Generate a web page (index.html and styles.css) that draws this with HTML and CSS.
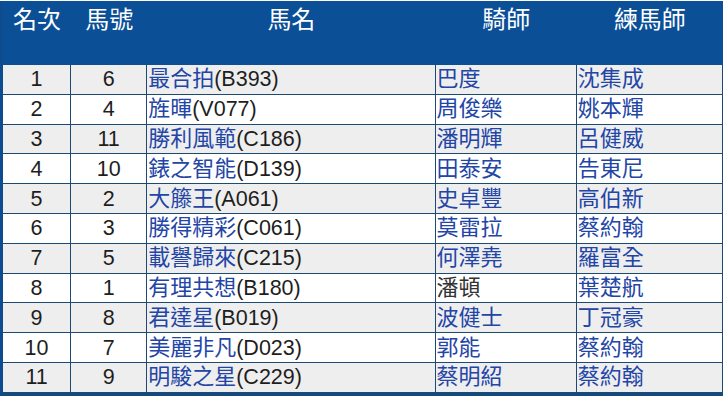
FILE: index.html
```html
<!DOCTYPE html>
<html lang="zh-Hant">
<head>
<meta charset="utf-8">
<title>排位表</title>
<link rel="stylesheet" href="styles.css">
</head>
<body>
<table class="race">
  <colgroup>
    <col class="c-rank"><col class="c-no"><col class="c-horse"><col class="c-jockey"><col class="c-trainer">
  </colgroup>
  <thead>
    <tr><th>名次</th><th>馬號</th><th>馬名</th><th>騎師</th><th>練馬師</th></tr>
  </thead>
  <tbody>
    <tr><td class="num">1</td><td class="num">6</td><td class="name"><span class="lk">最合拍</span>(B393)</td><td class="name lk">巴度</td><td class="name lk">沈集成</td></tr>
    <tr><td class="num">2</td><td class="num">4</td><td class="name"><span class="lk">旌暉</span>(V077)</td><td class="name lk">周俊樂</td><td class="name lk">姚本輝</td></tr>
    <tr><td class="num">3</td><td class="num">11</td><td class="name"><span class="lk">勝利風範</span>(C186)</td><td class="name lk">潘明輝</td><td class="name lk">呂健威</td></tr>
    <tr><td class="num">4</td><td class="num">10</td><td class="name"><span class="lk">錶之智能</span>(D139)</td><td class="name lk">田泰安</td><td class="name lk">告東尼</td></tr>
    <tr><td class="num">5</td><td class="num">2</td><td class="name"><span class="lk">大籐王</span>(A061)</td><td class="name lk">史卓豐</td><td class="name lk">高伯新</td></tr>
    <tr><td class="num">6</td><td class="num">3</td><td class="name"><span class="lk">勝得精彩</span>(C061)</td><td class="name lk">莫雷拉</td><td class="name lk">蔡約翰</td></tr>
    <tr><td class="num">7</td><td class="num">5</td><td class="name"><span class="lk">載譽歸來</span>(C215)</td><td class="name lk">何澤堯</td><td class="name lk">羅富全</td></tr>
    <tr><td class="num">8</td><td class="num">1</td><td class="name"><span class="lk">有理共想</span>(B180)</td><td class="name plain">潘頓</td><td class="name lk">葉楚航</td></tr>
    <tr><td class="num">9</td><td class="num">8</td><td class="name"><span class="lk">君達星</span>(B019)</td><td class="name lk">波健士</td><td class="name lk">丁冠豪</td></tr>
    <tr><td class="num">10</td><td class="num">7</td><td class="name"><span class="lk">美麗非凡</span>(D023)</td><td class="name lk">郭能</td><td class="name lk">蔡約翰</td></tr>
    <tr><td class="num">11</td><td class="num">9</td><td class="name"><span class="lk">明駿之星</span>(C229)</td><td class="name lk">蔡明紹</td><td class="name lk">蔡約翰</td></tr>
  </tbody>
</table>
</body>
</html>
```
FILE: styles.css
```css
html, body {
  margin: 0;
  padding: 0;
  background: #ffffff;
}
body {
  padding-top: 1px;
}
.race {
  border-collapse: separate;
  border-spacing: 0;
  table-layout: fixed;
  width: 723px;
  border-left: 3px solid #0d4d8f;
  border-bottom: 4px solid #164a7c;
  font-family: "Liberation Sans", "Noto Sans CJK TC", sans-serif;
}
.c-rank { width: 68px; }
.c-no { width: 76px; }
.c-horse { width: 288px; }
.c-jockey { width: 141px; }
.c-trainer { width: 146px; }

.race th {
  background: #0b4f97;
  color: #ffffff;
  font-family: "Noto Sans CJK TC", sans-serif;
  font-weight: 400;
  font-size: 24px;
  line-height: 30px;
  height: 62px;
  padding: 2px 0 0 0;
  vertical-align: top;
  text-align: center;
}
.race td {
  height: 28.8px;
  padding: 0;
  font-size: 21.5px;
  line-height: 28px;
  color: #1e1e1e;
  border-right: 1px solid #1d4a73;
  border-bottom: 1px solid #1d4a73;
  white-space: nowrap;
  overflow: hidden;
}
.race tbody tr:nth-child(odd) td {
  background: #eeeeee;
}
.race tbody tr:nth-child(even) td {
  background: #ffffff;
}
.race tbody tr:last-child td {
  border-bottom: none;
}
.race td.num {
  text-align: center;
}
.race td.name {
  text-align: left;
  padding-left: 1px;
}
.race .lk {
  color: #2245a6;
  font-size: 22px;
}
.race .plain {
  color: #333333;
  font-size: 22px;
}
```
